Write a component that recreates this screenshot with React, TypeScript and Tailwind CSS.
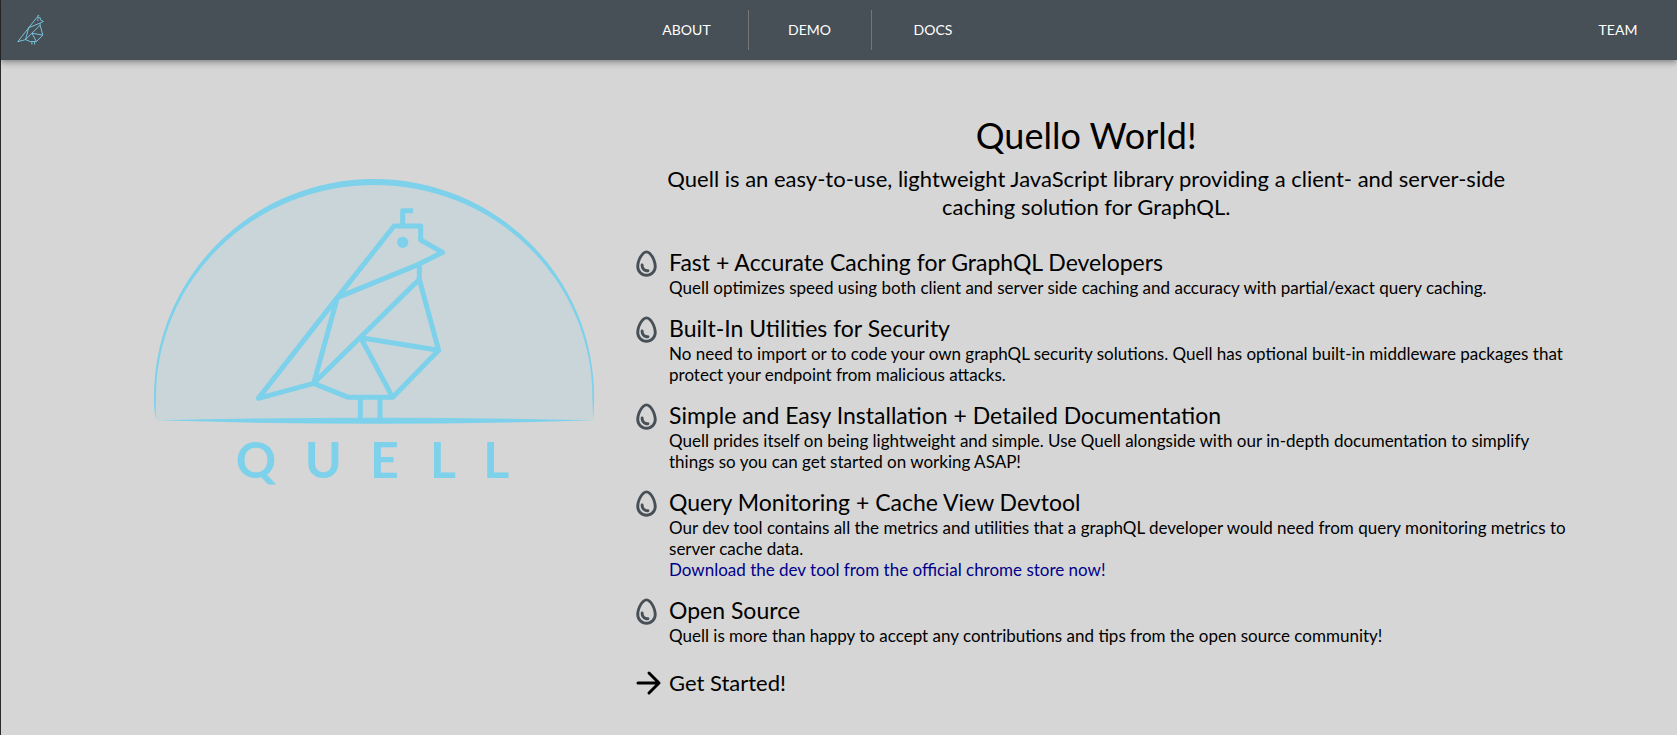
import React from "react";
import { MdOutlineEgg } from "react-icons/md";

type Feature = { title: string; body: string; link?: string };

const features: Feature[] = [
  {
    title: "Fast + Accurate Caching for GraphQL Developers",
    body: "Quell optimizes speed using both client and server side caching and accuracy with partial/exact query caching.",
  },
  {
    title: "Built-In Utilities for Security",
    body: "No need to import or to code your own graphQL security solutions. Quell has optional built-in middleware packages that protect your endpoint from malicious attacks.",
  },
  {
    title: "Simple and Easy Installation + Detailed Documentation",
    body: "Quell prides itself on being lightweight and simple. Use Quell alongside with our in-depth documentation to simplify things so you can get started on working ASAP!",
  },
  {
    title: "Query Monitoring + Cache View Devtool",
    body: "Our dev tool contains all the metrics and utilities that a graphQL developer would need from query monitoring metrics to server cache data.",
    link: "Download the dev tool from the official chrome store now!",
  },
  {
    title: "Open Source",
    body: "Quell is more than happy to accept any contributions and tips from the open source community!",
  },
];

function BirdLines() {
  return (
    <>
      <path d="M788 168V122H819" />
      <path d="M592 383L762 168H842V210L908 247L836 283Z" />
      <path d="M592 383L355 685L521 640Z" />
      <path d="M838 283V328L896 541L758 682H625L521 640L838 328" />
      <path d="M896 541L662 503L758 682" />
      <path d="M661 682V748M720 682V748" />
    </>
  );
}

function QuellLogo() {
  return (
    <svg viewBox="0 0 1410 990" className="w-full max-w-[470px]" role="img" aria-label="Quell">
      <path d="M43 680A660 653 0 0 1 1363 680L1359 750H47Z" fill="#7dd1ea" fillOpacity="0.14" />
      <path
        d="M42 680A660 653 0 0 1 1362 680Q1363 720 1359 748Q1359 720 1357 680A654 635 0 0 0 48 680Q46 720 48 748Q41 720 42 680Z"
        fill="#7dd1ea"
      />
      <path d="M50 751Q703 736 1362 751Q703 771 50 751Z" fill="#7dd1ea" />
      <g fill="none" stroke="#7dd1ea" strokeWidth="15" strokeLinejoin="round">
        <BirdLines />
      </g>
      <circle cx="788" cy="217" r="17" fill="#7dd1ea" />
      <text
        x="287 494 690 870 1030"
        y="923"
        fill="#7dd1ea"
        fontSize="150"
        className="font-['Lato',sans-serif] font-bold"
      >
        QUELL
      </text>
    </svg>
  );
}

function NavBird() {
  return (
    <svg viewBox="340 108 580 648" className="h-[30px] w-[27px]" aria-hidden="true">
      <g fill="none" stroke="#7dd1ea" strokeWidth="19" strokeLinejoin="round">
        <BirdLines />
      </g>
      <circle cx="788" cy="217" r="15" fill="#7dd1ea" />
    </svg>
  );
}

function Header() {
  return (
    <header className="flex h-[60px] items-center justify-between bg-[#474f57] text-sm text-white shadow-[0_2px_4px_-1px_rgba(0,0,0,0.2),0_4px_5px_0_rgba(0,0,0,0.14),0_1px_10px_0_rgba(0,0,0,0.12)]">
      <a href="#home" aria-label="Quell home" className="flex h-14 w-[60px] items-center pl-4">
        <NavBird />
      </a>
      <nav className="flex h-10 divide-x divide-[#757575]">
        <a href="#about" className="flex w-[123px] items-center justify-center">ABOUT</a>
        <a href="#demo" className="flex w-[123px] items-center justify-center">DEMO</a>
        <a href="#docs" className="flex w-[123px] items-center justify-center">DOCS</a>
      </nav>
      <a href="#team" className="flex h-10 w-[118px] items-center justify-center">TEAM</a>
    </header>
  );
}

export default function App() {
  return (
    <div className="min-h-screen border-l border-[#2b2b2b] bg-[#d6d6d6] font-['Lato',sans-serif] text-black">
      <Header />
      <main className="grid grid-cols-[342fr_658fr] pt-[53px] pr-[6%] pb-8 pl-[8%]">
        <div className="pt-[57px] pl-[5px]">
          <QuellLogo />
        </div>
        <div>
          <div className="pr-8 text-center">
            <h1 className="text-4xl leading-[44px]">Quello World!</h1>
            <p className="mt-2 px-6 text-[22px] leading-7">
              Quell is an easy-to-use, lightweight JavaScript library providing a client- and server-side caching
              solution for GraphQL.
            </p>
          </div>
          <ul className="mt-[26px] flex flex-col gap-[15px] pl-px">
            {features.map((f) => (
              <li key={f.title} className="flex gap-[5px]">
                <MdOutlineEgg size={35} className="-mt-px shrink-0 text-[#474f57]" aria-hidden="true" />
                <div>
                  <h2 className="text-[23px] leading-[30px]">{f.title}</h2>
                  <p className="text-[17px] leading-[21px]">{f.body}</p>
                  {f.link && (
                    <a href="#devtool" className="block text-[17px] leading-[21px] text-[#00008b]">
                      {f.link}
                    </a>
                  )}
                </div>
              </li>
            ))}
          </ul>
          <a href="#start" className="mt-[22px] flex items-center gap-[5px] pl-px text-[22px] leading-[30px]">
            <svg
              viewBox="0 0 35 30"
              className="h-[30px] w-[35px]"
              fill="none"
              stroke="currentColor"
              strokeWidth="3"
              strokeLinecap="round"
              strokeLinejoin="round"
              aria-hidden="true"
            >
              <path d="M9 15H30M20 5L30 15L20 25" />
            </svg>
            Get Started!
          </a>
        </div>
      </main>
    </div>
  );
}
